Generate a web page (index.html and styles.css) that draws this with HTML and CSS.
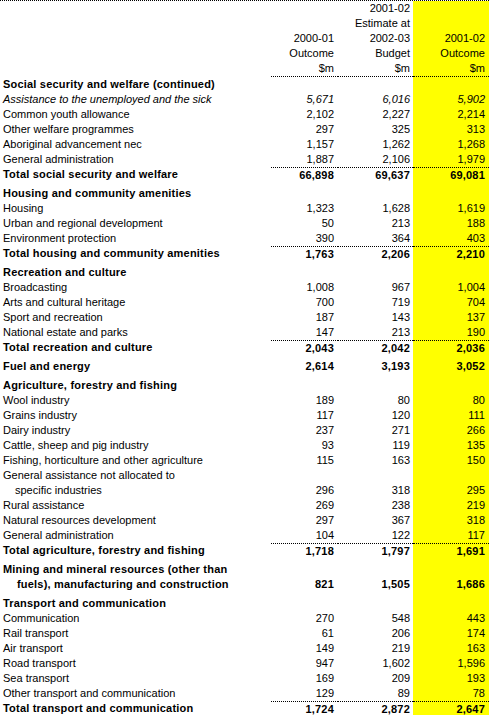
FILE: index.html
```html
<!DOCTYPE html>
<html lang="en">
<head>
    <meta charset="UTF-8">
    <title>Expenses by function 2001-02</title>
    <link rel="stylesheet" href="styles.css">
</head>
<body>
    <table class="outcomes">
        <colgroup>
            <col class="col-label">
            <col class="col-a">
            <col class="col-b">
            <col class="col-c">
        </colgroup>
        <thead>
            <tr>
                <th class="label"></th>
                <th class="num">2000-01<br>Outcome<br>$m</th>
                <th class="num">2001-02<br>Estimate at<br>2002-03<br>Budget<br>$m</th>
                <th class="num hl">2001-02<br>Outcome<br>$m</th>
            </tr>
        </thead>
        <tbody>
            <tr class="head">
                <td class="label">Social security and welfare (continued)</td>
                <td class="num"></td><td class="num"></td><td class="num hl"></td>
            </tr>
            <tr class="italic">
                <td class="label">Assistance to the unemployed and the sick</td>
                <td class="num">5,671</td><td class="num">6,016</td><td class="num hl">5,902</td>
            </tr>
            <tr>
                <td class="label">Common youth allowance</td>
                <td class="num">2,102</td><td class="num">2,227</td><td class="num hl">2,214</td>
            </tr>
            <tr>
                <td class="label">Other welfare programmes</td>
                <td class="num">297</td><td class="num">325</td><td class="num hl">313</td>
            </tr>
            <tr>
                <td class="label">Aboriginal advancement nec</td>
                <td class="num">1,157</td><td class="num">1,262</td><td class="num hl">1,268</td>
            </tr>
            <tr>
                <td class="label">General administration</td>
                <td class="num">1,887</td><td class="num">2,106</td><td class="num hl">1,979</td>
            </tr>
            <tr class="total">
                <td class="label">Total social security and welfare</td>
                <td class="num">66,898</td><td class="num">69,637</td><td class="num hl">69,081</td>
            </tr>

            <tr class="head gap">
                <td class="label">Housing and community amenities</td>
                <td class="num"></td><td class="num"></td><td class="num hl"></td>
            </tr>
            <tr>
                <td class="label">Housing</td>
                <td class="num">1,323</td><td class="num">1,628</td><td class="num hl">1,619</td>
            </tr>
            <tr>
                <td class="label">Urban and regional development</td>
                <td class="num">50</td><td class="num">213</td><td class="num hl">188</td>
            </tr>
            <tr>
                <td class="label">Environment protection</td>
                <td class="num">390</td><td class="num">364</td><td class="num hl">403</td>
            </tr>
            <tr class="total">
                <td class="label">Total housing and community amenities</td>
                <td class="num">1,763</td><td class="num">2,206</td><td class="num hl">2,210</td>
            </tr>

            <tr class="head gap">
                <td class="label">Recreation and culture</td>
                <td class="num"></td><td class="num"></td><td class="num hl"></td>
            </tr>
            <tr>
                <td class="label">Broadcasting</td>
                <td class="num">1,008</td><td class="num">967</td><td class="num hl">1,004</td>
            </tr>
            <tr>
                <td class="label">Arts and cultural heritage</td>
                <td class="num">700</td><td class="num">719</td><td class="num hl">704</td>
            </tr>
            <tr>
                <td class="label">Sport and recreation</td>
                <td class="num">187</td><td class="num">143</td><td class="num hl">137</td>
            </tr>
            <tr>
                <td class="label">National estate and parks</td>
                <td class="num">147</td><td class="num">213</td><td class="num hl">190</td>
            </tr>
            <tr class="total">
                <td class="label">Total recreation and culture</td>
                <td class="num">2,043</td><td class="num">2,042</td><td class="num hl">2,036</td>
            </tr>

            <tr class="head gap">
                <td class="label">Fuel and energy</td>
                <td class="num">2,614</td><td class="num">3,193</td><td class="num hl">3,052</td>
            </tr>

            <tr class="head gap">
                <td class="label">Agriculture, forestry and fishing</td>
                <td class="num"></td><td class="num"></td><td class="num hl"></td>
            </tr>
            <tr>
                <td class="label">Wool industry</td>
                <td class="num">189</td><td class="num">80</td><td class="num hl">80</td>
            </tr>
            <tr>
                <td class="label">Grains industry</td>
                <td class="num">117</td><td class="num">120</td><td class="num hl">111</td>
            </tr>
            <tr>
                <td class="label">Dairy industry</td>
                <td class="num">237</td><td class="num">271</td><td class="num hl">266</td>
            </tr>
            <tr>
                <td class="label">Cattle, sheep and pig industry</td>
                <td class="num">93</td><td class="num">119</td><td class="num hl">135</td>
            </tr>
            <tr>
                <td class="label">Fishing, horticulture and other agriculture</td>
                <td class="num">115</td><td class="num">163</td><td class="num hl">150</td>
            </tr>
            <tr>
                <td class="label">General assistance not allocated to</td>
                <td class="num"></td><td class="num"></td><td class="num hl"></td>
            </tr>
            <tr>
                <td class="label indent">specific industries</td>
                <td class="num">296</td><td class="num">318</td><td class="num hl">295</td>
            </tr>
            <tr>
                <td class="label">Rural assistance</td>
                <td class="num">269</td><td class="num">238</td><td class="num hl">219</td>
            </tr>
            <tr>
                <td class="label">Natural resources development</td>
                <td class="num">297</td><td class="num">367</td><td class="num hl">318</td>
            </tr>
            <tr>
                <td class="label">General administration</td>
                <td class="num">104</td><td class="num">122</td><td class="num hl">117</td>
            </tr>
            <tr class="total">
                <td class="label">Total agriculture, forestry and fishing</td>
                <td class="num">1,718</td><td class="num">1,797</td><td class="num hl">1,691</td>
            </tr>

            <tr class="head gap">
                <td class="label">Mining and mineral resources (other than</td>
                <td class="num"></td><td class="num"></td><td class="num hl"></td>
            </tr>
            <tr class="head">
                <td class="label indent-b">fuels), manufacturing and construction</td>
                <td class="num">821</td><td class="num">1,505</td><td class="num hl">1,686</td>
            </tr>

            <tr class="head gap">
                <td class="label">Transport and communication</td>
                <td class="num"></td><td class="num"></td><td class="num hl"></td>
            </tr>
            <tr>
                <td class="label">Communication</td>
                <td class="num">270</td><td class="num">548</td><td class="num hl">443</td>
            </tr>
            <tr>
                <td class="label">Rail transport</td>
                <td class="num">61</td><td class="num">206</td><td class="num hl">174</td>
            </tr>
            <tr>
                <td class="label">Air transport</td>
                <td class="num">149</td><td class="num">219</td><td class="num hl">163</td>
            </tr>
            <tr>
                <td class="label">Road transport</td>
                <td class="num">947</td><td class="num">1,602</td><td class="num hl">1,596</td>
            </tr>
            <tr>
                <td class="label">Sea transport</td>
                <td class="num">169</td><td class="num">209</td><td class="num hl">193</td>
            </tr>
            <tr>
                <td class="label">Other transport and communication</td>
                <td class="num">129</td><td class="num">89</td><td class="num hl">78</td>
            </tr>
            <tr class="total">
                <td class="label">Total transport and communication</td>
                <td class="num">1,724</td><td class="num">2,872</td><td class="num hl">2,647</td>
            </tr>
        </tbody>
    </table>
</body>
</html>
```

FILE: styles.css
```css
body {
    margin: 0;
    background: #fff;
    color: #000;
    font-family: "Liberation Sans", Arial, sans-serif;
    font-size: 11px;
}

.outcomes {
    width: 489px;
    table-layout: fixed;
    border-collapse: separate;
    border-spacing: 0;
    border-top: 1px dotted #000;
    border-bottom: 1px dotted #000;
}

.col-label { width: 271px; }
.col-a { width: 67px; }
.col-b { width: 75px; }
.col-c { width: 76px; }

.outcomes th,
.outcomes td {
    padding: 0;
    line-height: 15px;
    white-space: nowrap;
    vertical-align: top;
}

.outcomes th {
    font-weight: normal;
    vertical-align: bottom;
    border-bottom: 1px dotted #000;
}

.outcomes th.label {
    border-bottom: none;
}

.label {
    text-align: left;
    padding-left: 3px !important;
}

.num {
    text-align: right;
    padding-right: 4px !important;
}

.col-b-pad,
.outcomes tr > :nth-child(3) {
    padding-right: 3px !important;
}

.hl {
    background-color: #ffff00;
}

.head td {
    font-weight: bold;
    letter-spacing: 0.2px;
}

.gap td {
    padding-top: 4px;
}

.italic td {
    font-style: italic;
}

.total td {
    font-weight: bold;
    letter-spacing: 0.2px;
    line-height: 14px;
}

.total td.num {
    border-top: 1px dotted #000;
}

.indent {
    padding-left: 15px !important;
}

.indent-b {
    padding-left: 17px !important;
}
```
